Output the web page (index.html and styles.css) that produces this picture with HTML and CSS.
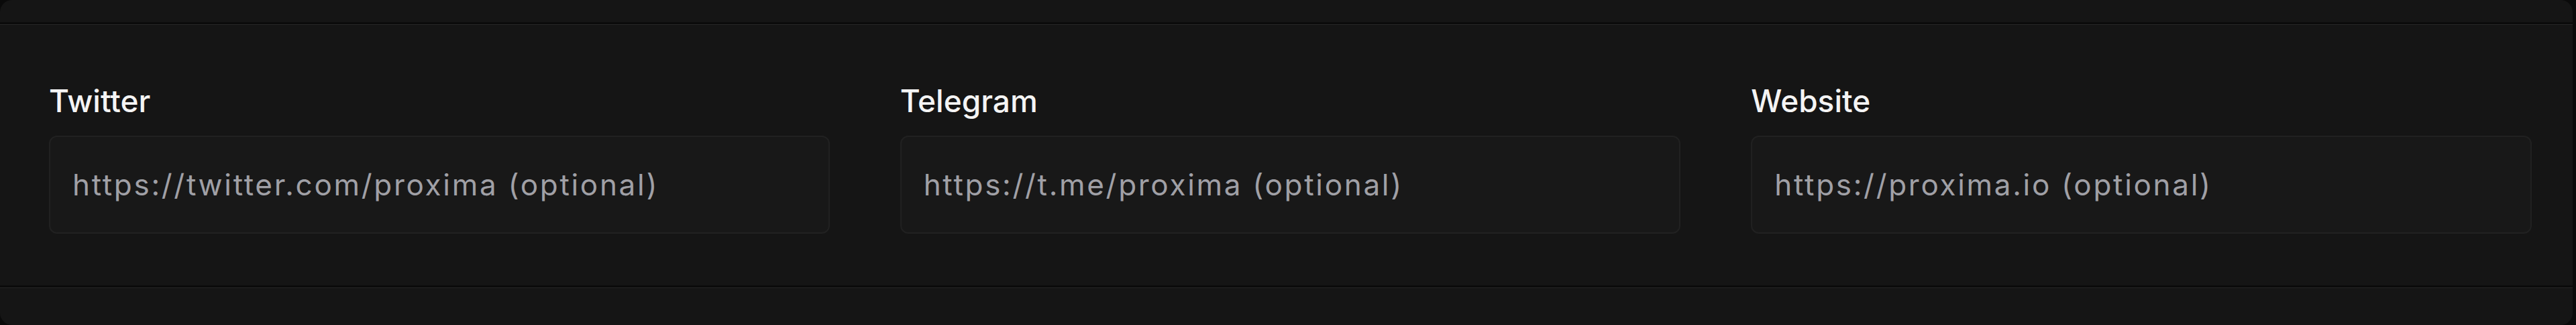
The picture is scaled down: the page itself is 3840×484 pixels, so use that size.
FILE: index.html
```html
<!DOCTYPE html>
<html lang="en">
<head>
<meta charset="utf-8">
<title>Social links</title>
<link rel="stylesheet" href="styles.css">
</head>
<body>
<div class="card">
  <div class="card-head"></div>
  <section class="fields">
    <div class="field">
      <label class="field-label" for="tw">Twitter</label>
      <input class="field-input" id="tw" type="text" placeholder="https://twitter.com/proxima (optional)">
    </div>
    <div class="field">
      <label class="field-label" for="tg">Telegram</label>
      <input class="field-input" id="tg" type="text" placeholder="https://t.me/proxima (optional)">
    </div>
    <div class="field">
      <label class="field-label" for="web">Website</label>
      <input class="field-input" id="web" type="text" placeholder="https://proxima.io (optional)">
    </div>
  </section>
  <div class="card-foot"></div>
</div>
</body>
</html>
```

FILE: styles.css
```css
* { box-sizing: border-box; }

html, body {
  margin: 0;
  padding: 0;
  background: #0a0a0a;
  height: 484px;
  overflow: hidden;
}

.card {
  width: 3835px;
  height: 484px;
  background: #151515;
  border-radius: 18px;
  overflow: hidden;
  display: flex;
  flex-direction: column;
}

.card-head {
  height: 33px;
  flex: none;
}

.fields {
  flex: none;
  display: grid;
  grid-template-columns: repeat(3, 1fr);
  column-gap: 105px;
  padding: 86px 61px 77px 73px;
  border-top: 3px solid #0b0b0b;
  border-bottom: 3px solid #0b0b0b;
  box-shadow: inset 0 1px 0 #262626;
}

.card-foot {
  flex: 1;
  box-shadow: inset 0 1px 0 #262626;
}

.field {
  display: flex;
  flex-direction: column;
  gap: 24px;
}

.field-label {
  font-family: Inter, "Liberation Sans", sans-serif;
  font-size: 46px;
  font-weight: 500;
  line-height: 56px;
  color: #f4f4f4;
}

.field-input {
  height: 146px;
  width: 100%;
  margin: 0;
  padding: 0 33px;
  background: #181818;
  border: 2px solid #212121;
  border-radius: 12px;
  font-family: Inter, "Liberation Sans", sans-serif;
  font-size: 44px;
  letter-spacing: 2.7px;
  line-height: 53px;
  color: #e6e6e6;
  outline: none;
}

.field-input::placeholder {
  color: #a0a0a6;
  opacity: 1;
}
```
